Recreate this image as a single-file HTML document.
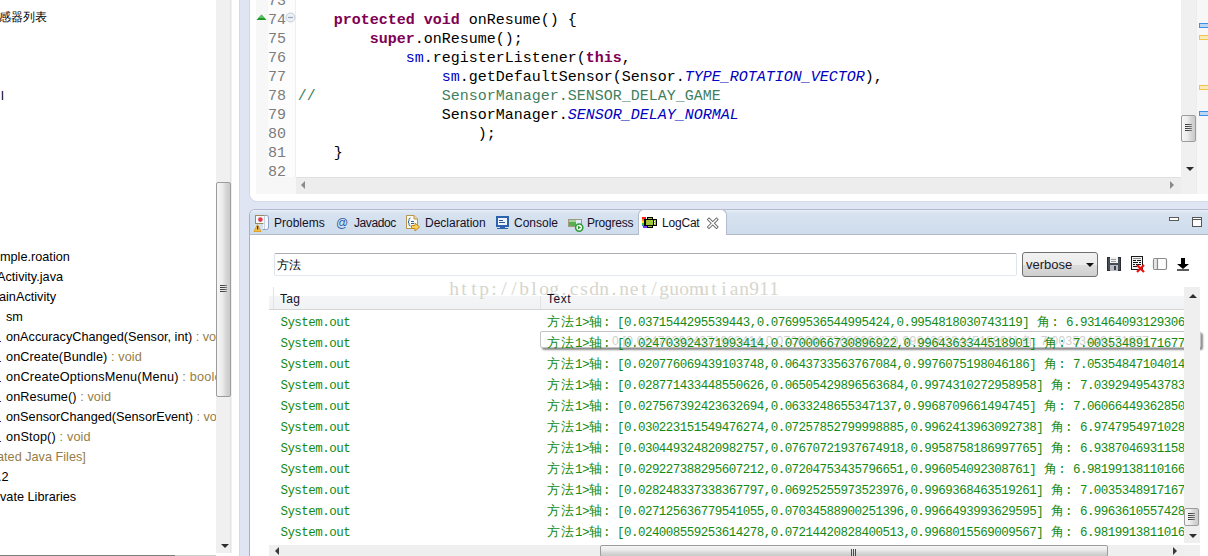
<!DOCTYPE html><html><head><meta charset="utf-8"><style>
*{margin:0;padding:0;box-sizing:border-box}
html,body{width:1208px;height:556px;overflow:hidden}
body{position:relative;background:#e0e5f4;font-family:"Liberation Sans",sans-serif;font-size:12px;color:#000}
.a{position:absolute}
i.cj{display:inline-block;font-style:normal;text-align:left;overflow:visible}
.tr{position:absolute;white-space:nowrap;font-size:12.7px;line-height:20px;height:20px}
.dec{color:#957d47}
.code{position:absolute;white-space:pre;font-family:"Liberation Mono",monospace;font-size:15px;line-height:19px;height:19px;left:297.7px}
.ln{position:absolute;white-space:pre;font-family:"Liberation Mono",monospace;font-size:15px;line-height:19px;color:#7c7c7c;left:250px;width:36px;text-align:right}
.kw{color:#7f0055;font-weight:bold}
.fld{color:#0000c0}
.sfi{color:#0000c0;font-style:italic}
.cmt{color:#3f7f5f}
.tab{position:absolute;white-space:nowrap;font-size:12px;line-height:14px;top:216px;color:#14102a}
.log{position:absolute;white-space:pre;font-family:"Liberation Mono",monospace;font-size:12.5px;letter-spacing:-0.515px;line-height:21px;height:21px;color:#148a14}
.grip{position:absolute;height:1px;background:linear-gradient(90deg,#333,#555 60%,#888)}
</style></head><body>
<div class="a" style="left:0;top:0;width:239px;height:556px;background:#fff"></div>
<div class="a" style="left:239px;top:0;width:1px;height:556px;background:#d5d9e7"></div>
<div class="a" style="left:0;top:0;width:216px;height:556px;overflow:hidden">
<div class="tr" style="font-size:12px;left:-1px;top:6.5px">感器列表</div>
<div class="tr" style="left:1px;top:86px">l</div>
<div class="tr" style="left:0px;top:247px">mple.roation</div>
<div class="tr" style="left:-3px;top:267px">Activity.java</div>
<div class="tr" style="left:-1px;top:287px">ainActivity</div>
<div class="tr" style="left:6px;top:307px">sm</div>
<div class="tr" style="left:6px;top:327px">onAccuracyChanged(Sensor, int) <span class="dec">: void</span></div>
<div class="tr" style="letter-spacing:0.08px;left:6px;top:347px">onCreate(Bundle) <span class="dec">: void</span></div>
<div class="tr" style="letter-spacing:0.19px;left:6px;top:367px">onCreateOptionsMenu(Menu) <span class="dec">: boolean</span></div>
<div class="tr" style="letter-spacing:0.08px;left:6px;top:387px">onResume() <span class="dec">: void</span></div>
<div class="tr" style="left:6px;top:407px">onSensorChanged(SensorEvent) <span class="dec">: void</span></div>
<div class="tr" style="letter-spacing:0.15px;left:6px;top:427px">onStop() <span class="dec">: void</span></div>
<div class="tr dec" style="left:-3px;top:447px">ated Java Files]</div>
<div class="tr" style="left:-2px;top:467px">.2</div>
<div class="tr" style="left:0px;top:487px">vate Libraries</div>
<div class="a" style="left:0;top:341px;width:1px;height:1px;background:#2a2aa0"></div>
<div class="a" style="left:0;top:361px;width:1px;height:1px;background:#2a2aa0"></div>
<div class="a" style="left:0;top:381px;width:1px;height:1px;background:#2a2aa0"></div>
<div class="a" style="left:0;top:401px;width:1px;height:1px;background:#2a2aa0"></div>
<div class="a" style="left:0;top:421px;width:1px;height:1px;background:#2a2aa0"></div>
<div class="a" style="left:0;top:441px;width:1px;height:1px;background:#2a2aa0"></div>
</div>
<div class="a" style="left:216px;top:0;width:16px;height:553px;background:#f0f0f0"></div>
<div class="a" style="left:230px;top:0;width:1px;height:553px;background:#e4e4e4"></div>
<div class="a" style="left:216px;top:182px;width:15px;height:215px;border:1px solid #9c9c9c;border-radius:2px;background:linear-gradient(90deg,#f6f6f6,#ececec 40%,#d6d6d6 70%,#cacaca)"></div>
<div class="grip" style="left:220px;top:285px;width:7px"></div>
<div class="grip" style="left:220px;top:287px;width:7px"></div>
<div class="grip" style="left:220px;top:289px;width:7px"></div>
<div class="grip" style="left:220px;top:291px;width:7px"></div>
<div class="a" style="left:220.5px;top:544px;width:0;height:0;border-left:4px solid transparent;border-right:4px solid transparent;border-top:4px solid #2e2e2e"></div>
<div class="a" style="left:0;top:555px;width:175px;height:1px;background:#7d7d7d"></div>
<div class="a" style="left:175px;top:555px;width:41px;height:1px;background:#cdcdcd"></div>
<div class="a" style="left:249px;top:-10px;width:970px;height:212px;background:#fff;border-bottom-left-radius:8px;border-left:1px solid #d3d8e6;border-bottom:1px solid #d6dbe8"></div>
<div class="a" style="left:256px;top:0;width:40px;height:194px;background:#f7f7f7"></div>
<div class="a" style="left:268px;top:0;width:27px;height:177px;background:#fcfcfc"></div>
<div class="a" style="left:295px;top:0;width:1px;height:177px;background:#eeeeee"></div>
<div class="ln" style="top:-8.1px">73</div>
<div class="ln" style="top:10.9px">74</div>
<div class="ln" style="top:29.9px">75</div>
<div class="ln" style="top:48.9px">76</div>
<div class="ln" style="top:67.9px">77</div>
<div class="ln" style="top:86.9px">78</div>
<div class="ln" style="top:105.9px">79</div>
<div class="ln" style="top:124.9px">80</div>
<div class="ln" style="top:143.9px">81</div>
<div class="ln" style="top:162.9px">82</div>
<div class="code" style="top:10.9px">    <span class="kw">protected</span> <span class="kw">void</span> onResume() {</div>
<div class="code" style="top:29.9px">        <span class="kw">super</span>.onResume();</div>
<div class="code" style="top:48.9px">            <span class="fld">sm</span>.registerListener(<span class="kw">this</span>,</div>
<div class="code" style="top:67.9px">                <span class="fld">sm</span>.getDefaultSensor(Sensor.<span class="sfi">TYPE_ROTATION_VECTOR</span>),</div>
<div class="code" style="top:86.9px"><span class="cmt">//              SensorManager.SENSOR_DELAY_GAME</span></div>
<div class="code" style="top:105.9px">                SensorManager.<span class="sfi">SENSOR_DELAY_NORMAL</span></div>
<div class="code" style="top:124.9px">                    );</div>
<div class="code" style="top:143.9px">    }</div>
<svg class="a" style="left:256px;top:13px" width="12" height="8"><path d="M0.5 7 L5.5 1.5 L10.5 7 Z" fill="#1f9a2a"/><path d="M2.5 5 L5.5 2 L8.5 5 Z" fill="#5cc45f"/></svg>
<svg class="a" style="left:285px;top:12px" width="11" height="11"><circle cx="5.5" cy="5.5" r="4.5" fill="#edf1f7" stroke="#c3ccd9"/><path d="M3 5.5 H8" stroke="#97a6bb" stroke-width="1.2"/></svg>
<div class="a" style="left:296px;top:177px;width:885px;height:17px;background:#ededed;border-top:1px solid #e0e0e0"></div>
<div class="a" style="left:301px;top:181px;width:0;height:0;border-top:4px solid transparent;border-bottom:4px solid transparent;border-right:4px solid #8a8a8a"></div>
<div class="a" style="left:1170px;top:181px;width:0;height:0;border-top:4px solid transparent;border-bottom:4px solid transparent;border-left:4px solid #8a8a8a"></div>
<div class="a" style="left:1181px;top:0;width:15px;height:194px;background:#f0f0f0"></div>
<div class="a" style="left:1181px;top:115px;width:15px;height:27px;border:1px solid #9c9c9c;border-radius:2px;background:linear-gradient(90deg,#f6f6f6,#ececec 40%,#d6d6d6 70%,#cacaca)"></div>
<div class="grip" style="left:1185px;top:124px;width:7px"></div>
<div class="grip" style="left:1185px;top:126px;width:7px"></div>
<div class="grip" style="left:1185px;top:128px;width:7px"></div>
<div class="grip" style="left:1185px;top:130px;width:7px"></div>
<div class="a" style="left:1185.5px;top:167px;width:0;height:0;border-left:4px solid transparent;border-right:4px solid transparent;border-top:4px solid #2a2a2a"></div>
<div class="a" style="left:1196px;top:0;width:12px;height:194px;background:#f7f7f7;border-left:1px solid #ececec"></div>
<div class="a" style="left:1199px;top:23px;width:12px;height:5px;border:1px solid #3d8fe8;background:#bcd6f5"></div>
<div class="a" style="left:1199px;top:35px;width:12px;height:5px;border:1px solid #f0c64a;background:#fbeab8"></div>
<div class="a" style="left:1199px;top:85px;width:12px;height:5px;border:1px solid #f0c64a;background:#fbeab8"></div>
<div class="a" style="left:1199px;top:111px;width:12px;height:5px;border:1px solid #3d8fe8;background:#bcd6f5"></div>
<div class="a" style="left:249px;top:209px;width:970px;height:360px;background:#fff;border-top-left-radius:6px;border-left:1px solid #a9b1c3;border-top:1px solid #b3bbcc"></div>
<div class="a" style="left:250px;top:210px;width:960px;height:24px;background:linear-gradient(#e6eef8 0,#d6e2ef 4px,#cfdcec 100%);border-top-left-radius:5px"></div>
<div class="a" style="left:250px;top:234px;width:960px;height:1px;background:#b1b9c8"></div>
<div class="a" style="left:638px;top:209px;width:89px;height:26px;background:#fff;border:1px solid #b3bbcc;border-bottom:none;border-radius:6px 6px 0 0"></div>
<div class="tab" style="left:274px">Problems</div>
<div class="tab" style="left:336px;top:216px;font-size:12px;color:#2c5ca6">@</div>
<div class="tab" style="left:354px;letter-spacing:-0.4px">Javadoc</div>
<div class="tab" style="left:425px">Declaration</div>
<div class="tab" style="left:514px">Console</div>
<div class="tab" style="left:587px;letter-spacing:-0.2px">Progress</div>
<div class="tab" style="left:662px;letter-spacing:-0.2px">LogCat</div>
<svg class="a" style="left:252px;top:213px" width="20" height="20">
<rect x="3.5" y="2.5" width="9" height="8" fill="#f2f8fc" stroke="#9c8a58"/>
<circle cx="8.4" cy="6.6" r="2.3" fill="#e23a44"/>
<path d="M12.5 2.5 H15 Q16.5 2.5 16.5 5 V14 Q16.5 16.5 14.5 16.5 H10.5" fill="#f4f7fb" stroke="#8ea0c4"/>
<path d="M12.5 3 V16" stroke="#c8d0dc"/>
<path d="M2 18.5 L5.5 11.5 L9 18.5 Z" fill="#f4c24a" stroke="#e1a12e"/>
<rect x="5" y="13" width="1.2" height="3.5" fill="#303030"/>
</svg>
<svg class="a" style="left:404px;top:213px" width="18" height="19">
<path d="M2.5 2.5 H10 L13.5 6 V15.5 H2.5 Z" fill="#fbfaf4" stroke="#b9964a"/>
<path d="M10 2.5 V6 H13.5" fill="#e8d9a8" stroke="#b9964a"/>
<path d="M6.5 5 Q5 5 5 6.5 V8 L4 9 L5 10 V11.5 Q5 13 6.5 13" fill="none" stroke="#2f62a8" stroke-width="1"/>
<path d="M7 8.5 H10 M7 10.5 H10" stroke="#2f62a8"/>
<path d="M7.5 12.5 H11 V10 L15.5 14 L11 18 V15.5 H7.5 Z" fill="#f9d35c" stroke="#c78b1c"/>
</svg>
<svg class="a" style="left:494px;top:214px" width="17" height="16" shape-rendering="crispEdges">
<rect x="2" y="2" width="13" height="11" fill="#2f62ad"/>
<rect x="4" y="4" width="9" height="7" fill="#eef4fb"/>
<rect x="5" y="6" width="4" height="1" fill="#2a559a"/>
<rect x="5" y="8" width="6" height="1" fill="#2a559a"/>
<rect x="6" y="13" width="5" height="1" fill="#2f62ad"/>
<rect x="3" y="14" width="11" height="1" fill="#2f62ad"/>
</svg>
<svg class="a" style="left:566px;top:217px" width="19" height="16">
<rect x="2.5" y="2.5" width="13" height="7" fill="#dcebf5" stroke="#a39780"/>
<rect x="3" y="3" width="7" height="6" fill="#5aae52"/>
<rect x="3" y="3" width="7" height="2" fill="#9fd49a"/>
<circle cx="13.2" cy="10.6" r="3.6" fill="#fff" stroke="#2d9a33" stroke-width="1.6"/>
<path d="M12 8.6 L15 10.6 L12 12.6 Z" fill="#2d9a33"/>
</svg>
<svg class="a" style="left:641px;top:216px" width="18" height="13" shape-rendering="crispEdges">
<rect x="1" y="1" width="4" height="2" fill="#ff1a1a"/>
<rect x="1" y="3" width="2" height="2" fill="#ff8a1a"/>
<rect x="1" y="5" width="3" height="2" fill="#ffe21a"/>
<rect x="1" y="7" width="2" height="2" fill="#33cc33"/>
<rect x="1" y="9" width="2" height="1" fill="#2a7cff"/>
<rect x="2" y="10" width="4" height="2" fill="#7a33ff"/>
<rect x="6" y="1" width="6" height="3" fill="#000"/>
<rect x="6" y="9" width="6" height="3" fill="#000"/>
<rect x="3" y="3" width="10" height="7" fill="#000"/>
<rect x="7" y="2" width="4" height="1" fill="#a4c639"/>
<rect x="7" y="10" width="4" height="1" fill="#a4c639"/>
<rect x="5" y="4" width="7" height="5" fill="#a4c639"/>
<rect x="12" y="3" width="4" height="7" fill="#000"/>
<rect x="13" y="4" width="2" height="5" fill="#a4c639"/>
<rect x="13" y="5" width="1" height="1" fill="#fff"/>
<rect x="13" y="7" width="1" height="1" fill="#fff"/>
</svg>
<svg class="a" style="left:706px;top:217px" width="14" height="13">
<path d="M3 2.5 L10.5 10 M10.5 2.5 L3 10" stroke="#666666" stroke-width="3.2" stroke-linecap="square"/>
<path d="M3 2.5 L10.5 10 M10.5 2.5 L3 10" stroke="#ffffff" stroke-width="1.5" stroke-linecap="square"/>
</svg>
<div class="a" style="left:1169px;top:217px;width:10px;height:4px;border:1px solid #5a5a5a;background:#fff"></div>
<div class="a" style="left:1192px;top:217px;width:10px;height:10px;border:1px solid #555;background:#fff"></div>
<div class="a" style="left:1193px;top:219px;width:8px;height:1px;background:#555"></div>
<div class="a" style="left:274px;top:253px;width:743px;height:23px;border:1px solid #dfe3ea;border-top-color:#abadb3;border-bottom-color:#e3e9ef;border-radius:2px;background:#fff"></div>
<div class="a" style="left:277px;top:257px;font-size:12px;line-height:16px;white-space:nowrap">方法</div>
<div class="a" style="left:1022px;top:252px;width:76px;height:25px;border:1px solid #707070;border-radius:3px;background:linear-gradient(#f2f2f2,#ebebeb 50%,#dddddd 51%,#cfcfcf)"></div>
<div class="a" style="left:1026px;top:257px;font-size:13px;line-height:15px;color:#1a1a2a;white-space:nowrap">verbose</div>
<div class="a" style="left:1085.5px;top:263px;width:0;height:0;border-left:4px solid transparent;border-right:4px solid transparent;border-top:4px solid #111"></div>
<svg class="a" style="left:1106px;top:256px" width="17" height="17" shape-rendering="crispEdges">
<rect x="1" y="1" width="14" height="14" fill="#2a2e33"/>
<rect x="2" y="2" width="12" height="12" fill="#474d55"/>
<rect x="4" y="1" width="8" height="6" fill="#f2f2f2"/>
<rect x="5" y="3" width="5" height="1" fill="#9a9a9a"/>
<rect x="5" y="5" width="5" height="1" fill="#9a9a9a"/>
<rect x="4" y="9" width="8" height="6" fill="#b8bcc2"/>
<rect x="8" y="10" width="2" height="4" fill="#3a3e44"/>
</svg>
<svg class="a" style="left:1130px;top:255px" width="17" height="18" shape-rendering="crispEdges">
<rect x="1" y="1" width="12" height="14" fill="#1a1a1a"/>
<rect x="2" y="2" width="10" height="12" fill="#f4f4f4"/>
<rect x="3" y="3" width="8" height="1" fill="#8a8a8a"/>
<rect x="3" y="5" width="3" height="1" fill="#111"/><rect x="7" y="5" width="4" height="1" fill="#111"/>
<rect x="3" y="7" width="5" height="1" fill="#111"/><rect x="9" y="7" width="2" height="1" fill="#111"/>
<rect x="3" y="9" width="2" height="1" fill="#111"/><rect x="6" y="9" width="5" height="1" fill="#111"/>
<rect x="3" y="11" width="4" height="1" fill="#111"/>
</svg>
<svg class="a" style="left:1136px;top:264px" width="9" height="9"><path d="M1 1 L8 8 M8 1 L1 8" stroke="#f01010" stroke-width="2.2"/></svg>
<svg class="a" style="left:1152px;top:257px" width="16" height="14">
<rect x="1.5" y="1.5" width="13" height="11" rx="1.5" fill="#fff" stroke="#8a8a8a" stroke-width="1.2"/>
<rect x="2.2" y="2.2" width="3" height="9.6" fill="#e4e4e4"/>
<path d="M5.5 1.5 V12.5" stroke="#8a8a8a" stroke-width="1.2"/>
</svg>
<svg class="a" style="left:1176px;top:257px" width="14" height="15" shape-rendering="crispEdges">
<rect x="5" y="1" width="4" height="7" fill="#000"/>
<path d="M1 7 H13 L7 12 Z" fill="#000" shape-rendering="auto"/>
<rect x="1" y="12" width="12" height="2" fill="#5a5a5a"/>
</svg>
<div class="a" style="left:269px;top:287px;width:915px;height:22px;background:linear-gradient(#fff 0,#fff 40%,#f4f5f7 41%,#f1f2f4)"></div>
<div class="a" style="left:269px;top:309px;width:915px;height:1px;background:#d5d5d5"></div>
<div class="a" style="left:273px;top:287px;width:1px;height:22px;background:#e3e3e3"></div>
<div class="a" style="left:540px;top:296px;width:1px;height:13px;background:#e3e3e3"></div>
<div class="a" style="left:449px;top:279px;font-family:'Liberation Serif',serif;font-size:19.5px;line-height:20px;color:#d6d6cc;white-space:pre"><i style="display:inline-block;width:10px;text-align:center;font-style:normal">h</i><i style="display:inline-block;width:10px;text-align:center;font-style:normal">t</i><i style="display:inline-block;width:10px;text-align:center;font-style:normal">t</i><i style="display:inline-block;width:10px;text-align:center;font-style:normal">p</i><i style="display:inline-block;width:10px;text-align:center;font-style:normal">:</i><i style="display:inline-block;width:10px;text-align:center;font-style:normal">/</i><i style="display:inline-block;width:10px;text-align:center;font-style:normal">/</i><i style="display:inline-block;width:10px;text-align:center;font-style:normal">b</i><i style="display:inline-block;width:10px;text-align:center;font-style:normal">l</i><i style="display:inline-block;width:10px;text-align:center;font-style:normal">o</i><i style="display:inline-block;width:10px;text-align:center;font-style:normal">g</i><i style="display:inline-block;width:10px;text-align:center;font-style:normal">.</i><i style="display:inline-block;width:10px;text-align:center;font-style:normal">c</i><i style="display:inline-block;width:10px;text-align:center;font-style:normal">s</i><i style="display:inline-block;width:10px;text-align:center;font-style:normal">d</i><i style="display:inline-block;width:10px;text-align:center;font-style:normal">n</i><i style="display:inline-block;width:10px;text-align:center;font-style:normal">.</i><i style="display:inline-block;width:10px;text-align:center;font-style:normal">n</i><i style="display:inline-block;width:10px;text-align:center;font-style:normal">e</i><i style="display:inline-block;width:10px;text-align:center;font-style:normal">t</i><i style="display:inline-block;width:10px;text-align:center;font-style:normal">/</i><i style="display:inline-block;width:10px;text-align:center;font-style:normal">g</i><i style="display:inline-block;width:10px;text-align:center;font-style:normal">u</i><i style="display:inline-block;width:10px;text-align:center;font-style:normal">o</i><i style="display:inline-block;width:10px;text-align:center;font-style:normal">m</i><i style="display:inline-block;width:10px;text-align:center;font-style:normal">u</i><i style="display:inline-block;width:10px;text-align:center;font-style:normal">t</i><i style="display:inline-block;width:10px;text-align:center;font-style:normal">i</i><i style="display:inline-block;width:10px;text-align:center;font-style:normal">a</i><i style="display:inline-block;width:10px;text-align:center;font-style:normal">n</i><i style="display:inline-block;width:10px;text-align:center;font-style:normal">9</i><i style="display:inline-block;width:10px;text-align:center;font-style:normal">1</i><i style="display:inline-block;width:10px;text-align:center;font-style:normal">1</i></div>
<div class="tab" style="left:280px;top:292px;letter-spacing:0.3px">Tag</div>
<div class="tab" style="left:547px;top:292px;letter-spacing:0.5px">Text</div>
<div class="a" style="left:540px;top:331px;width:661px;height:17px;border:1px solid #c4c4c4;border-radius:2px;background:#fff;box-shadow:2px 2px 2px rgba(0,0,0,0.45)"></div>
<div class="a" style="left:612px;top:334px;font-size:12px;line-height:14px;color:#cfcfcf;white-space:pre;letter-spacing:0.3px">0.[0.024703924371993414,0.0700066730896922,0.9964363344518901] 角: 7.00353489171677</div>
<div class="a" style="left:1184px;top:287px;width:16px;height:256px;background:#efefef"></div>
<div class="a" style="left:1188.5px;top:294px;width:0;height:0;border-left:4px solid transparent;border-right:4px solid transparent;border-bottom:4px solid #2e2e2e"></div>
<div class="a" style="left:1184px;top:508px;width:15px;height:18px;border:1px solid #9c9c9c;border-radius:2px;background:linear-gradient(90deg,#f6f6f6,#ececec 40%,#d6d6d6 70%,#cacaca)"></div>
<div class="grip" style="left:1188px;top:513px;width:7px"></div>
<div class="grip" style="left:1188px;top:515px;width:7px"></div>
<div class="grip" style="left:1188px;top:517px;width:7px"></div>
<div class="grip" style="left:1188px;top:519px;width:7px"></div>
<div class="a" style="left:1188.5px;top:534px;width:0;height:0;border-left:4px solid transparent;border-right:4px solid transparent;border-top:4px solid #2e2e2e"></div>
<div class="a" style="left:269px;top:310px;width:915px;height:235px;overflow:hidden">
<div class="log" style="left:11.399999999999977px;top:3px">System.out</div>
<div class="log" style="left:278px;top:3px"><i class="cj" style="width:14px">方</i><i class="cj" style="width:14px">法</i>1&gt;<i class="cj" style="width:14px">轴</i>: [0.0371544295539443,0.07699536544995424,0.9954818030743119] <i class="cj" style="width:15px;padding-left:1px">角</i><i class="cj" style="width:7.8px">:</i> 6.931464093129306</div>
<div class="log" style="left:11.399999999999977px;top:24px">System.out</div>
<div class="log" style="left:278px;top:24px"><i class="cj" style="width:14px">方</i><i class="cj" style="width:14px">法</i>1&gt;<i class="cj" style="width:14px">轴</i>: [0.024703924371993414,0.0700066730896922,0.9964363344518901] <i class="cj" style="width:15px;padding-left:1px">角</i><i class="cj" style="width:7.8px">:</i> 7.00353489171677</div>
<div class="log" style="left:11.399999999999977px;top:45px">System.out</div>
<div class="log" style="left:278px;top:45px"><i class="cj" style="width:14px">方</i><i class="cj" style="width:14px">法</i>1&gt;<i class="cj" style="width:14px">轴</i>: [0.020776069439103748,0.0643733563767084,0.9976075198046186] <i class="cj" style="width:15px;padding-left:1px">角</i><i class="cj" style="width:7.8px">:</i> 7.05354847104014</div>
<div class="log" style="left:11.399999999999977px;top:66px">System.out</div>
<div class="log" style="left:278px;top:66px"><i class="cj" style="width:14px">方</i><i class="cj" style="width:14px">法</i>1&gt;<i class="cj" style="width:14px">轴</i>: [0.028771433448550626,0.06505429896563684,0.9974310272958958] <i class="cj" style="width:15px;padding-left:1px">角</i><i class="cj" style="width:7.8px">:</i> 7.0392949543783</div>
<div class="log" style="left:11.399999999999977px;top:87px">System.out</div>
<div class="log" style="left:278px;top:87px"><i class="cj" style="width:14px">方</i><i class="cj" style="width:14px">法</i>1&gt;<i class="cj" style="width:14px">轴</i>: [0.027567392423632694,0.0633248655347137,0.9968709661494745] <i class="cj" style="width:15px;padding-left:1px">角</i><i class="cj" style="width:7.8px">:</i> 7.06066449362850</div>
<div class="log" style="left:11.399999999999977px;top:108px">System.out</div>
<div class="log" style="left:278px;top:108px"><i class="cj" style="width:14px">方</i><i class="cj" style="width:14px">法</i>1&gt;<i class="cj" style="width:14px">轴</i>: [0.030223151549476274,0.07257852799998885,0.9962413963092738] <i class="cj" style="width:15px;padding-left:1px">角</i><i class="cj" style="width:7.8px">:</i> 6.9747954971028</div>
<div class="log" style="left:11.399999999999977px;top:129px">System.out</div>
<div class="log" style="left:278px;top:129px"><i class="cj" style="width:14px">方</i><i class="cj" style="width:14px">法</i>1&gt;<i class="cj" style="width:14px">轴</i>: [0.030449324820982757,0.07670721937674918,0.9958758186997765] <i class="cj" style="width:15px;padding-left:1px">角</i><i class="cj" style="width:7.8px">:</i> 6.9387046931158</div>
<div class="log" style="left:11.399999999999977px;top:150px">System.out</div>
<div class="log" style="left:278px;top:150px"><i class="cj" style="width:14px">方</i><i class="cj" style="width:14px">法</i>1&gt;<i class="cj" style="width:14px">轴</i>: [0.029227388295607212,0.07204753435796651,0.996054092308761] <i class="cj" style="width:15px;padding-left:1px">角</i><i class="cj" style="width:7.8px">:</i> 6.98199138110166</div>
<div class="log" style="left:11.399999999999977px;top:171px">System.out</div>
<div class="log" style="left:278px;top:171px"><i class="cj" style="width:14px">方</i><i class="cj" style="width:14px">法</i>1&gt;<i class="cj" style="width:14px">轴</i>: [0.028248337338367797,0.06925255973523976,0.9969368463519261] <i class="cj" style="width:15px;padding-left:1px">角</i><i class="cj" style="width:7.8px">:</i> 7.0035348917167</div>
<div class="log" style="left:11.399999999999977px;top:192px">System.out</div>
<div class="log" style="left:278px;top:192px"><i class="cj" style="width:14px">方</i><i class="cj" style="width:14px">法</i>1&gt;<i class="cj" style="width:14px">轴</i>: [0.027125636779541055,0.07034588900251396,0.9966493993629595] <i class="cj" style="width:15px;padding-left:1px">角</i><i class="cj" style="width:7.8px">:</i> 6.9963610557428</div>
<div class="log" style="left:11.399999999999977px;top:213px">System.out</div>
<div class="log" style="left:278px;top:213px"><i class="cj" style="width:14px">方</i><i class="cj" style="width:14px">法</i>1&gt;<i class="cj" style="width:14px">轴</i>: [0.024008559253614278,0.07214420828400513,0.9968015569009567] <i class="cj" style="width:15px;padding-left:1px">角</i><i class="cj" style="width:7.8px">:</i> 6.9819913811016</div>
</div>
<div class="a" style="left:1184px;top:545px;width:16px;height:11px;background:#f0f0f0"></div>
<div class="a" style="left:269px;top:545px;width:915px;height:11px;background:#efefef"></div>
<div class="a" style="left:600px;top:545px;width:508px;height:12px;border:1px solid #9c9c9c;border-radius:2px;background:linear-gradient(#f6f6f6,#ececec 40%,#d6d6d6 70%,#cacaca)"></div>
<div class="a" style="left:275px;top:547px;width:0;height:0;border-top:4px solid transparent;border-bottom:4px solid transparent;border-right:4px solid #3a3a3a"></div>
<div class="a" style="left:1173px;top:547px;width:0;height:0;border-top:4px solid transparent;border-bottom:4px solid transparent;border-left:4px solid #3a3a3a"></div>
<div class="a" style="left:851px;top:549px;width:1px;height:7px;background:#4a4a4a"></div>
<div class="a" style="left:853px;top:549px;width:1px;height:7px;background:#4a4a4a"></div>
<div class="a" style="left:855px;top:549px;width:1px;height:7px;background:#4a4a4a"></div>
</body></html>
